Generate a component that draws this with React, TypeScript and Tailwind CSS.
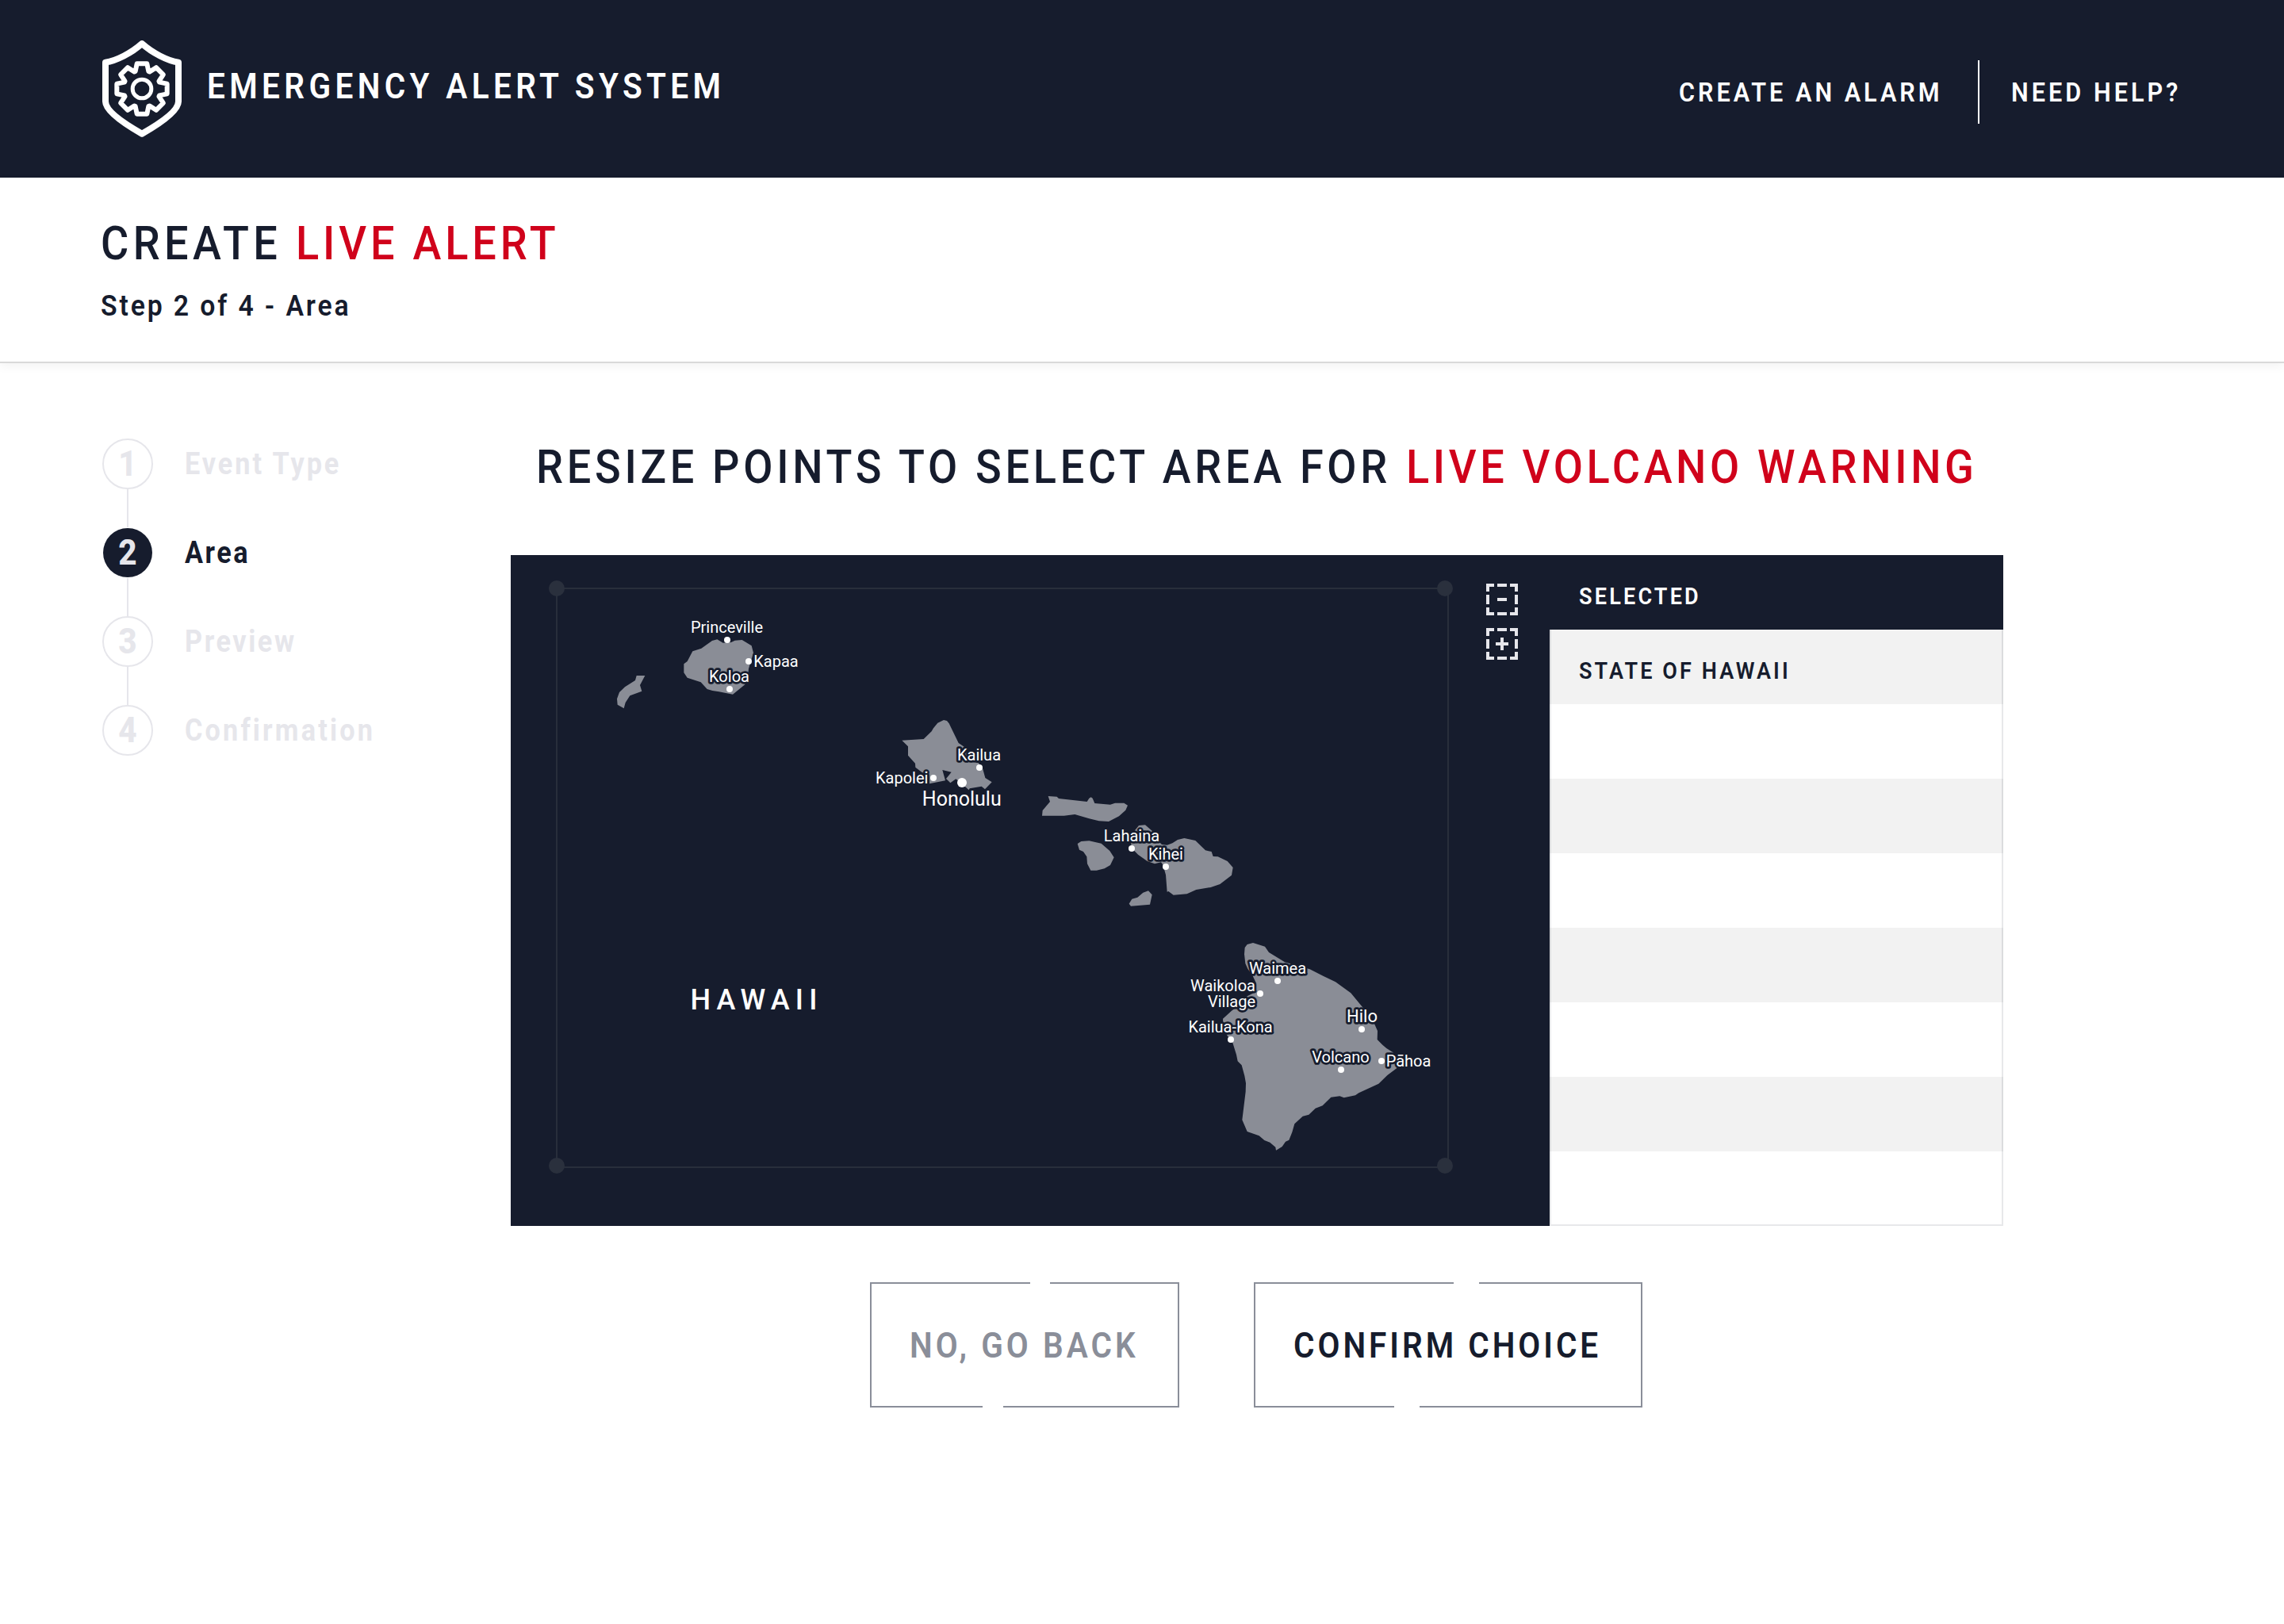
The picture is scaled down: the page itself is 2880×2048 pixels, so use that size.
const ISLANDS = [
  { x: 660, y: 690, points: "428,486 460,486 441,522 448,545 403,562 386,588 380,610 356,596 354,574 363,549 384,529 423,504" },
  { x: 660, y: 690, points: "733,349 755,362 786,360 800,353 827,351 863,373 870,400 864,420 852,460 850,480 838,520 792,557 740,547 715,543 695,537 671,511 620,494 607,475 607,442 620,432 640,394 673,383 714,354" },
  { x: 1080, y: 860, points: "172,221 254,216 284,187 291,175 307,155 330,144 342,147 350,157 386,231 408,246 430,300 462,307 478,330 487,363 512,379 486,406 473,395 428,403 425,409 410,395 376,367 355,382 339,366 359,341 325,333 336,373 276,385 275,350 248,342 223,323 222,308 195,278 195,244" },
  { x: 1080, y: 860, points: "725,432 758,434 765,441 872,453 880,440 887,436 893,440 901,459 960,464 978,458 1012,458 1026,467 1018,485 993,508 954,528 917,526 880,517 826,501 785,506 702,506 704,486 732,453" },
  { x: 1080, y: 860, points: "836,612 850,603 880,601 926,611 958,639 974,664 960,693 938,706 908,713 886,713 873,688 871,661 858,642 843,635" },
  { x: 1080, y: 860, points: "1104,790 1118,805 1110,842 1038,848 1031,839 1042,821 1063,815 1084,797" },
  { x: 1080, y: 860, points: "1053,562 1068,543 1092,541 1118,563 1130,590 1155,615 1175,617 1195,610 1215,597 1240,591 1282,600 1320,637 1343,642 1349,660 1367,661 1403,678 1424,702 1419,731 1375,765 1340,777 1285,786 1250,802 1199,806 1180,792 1175,794 1170,730 1163,705 1158,690 1152,682 1128,688 1100,678 1065,653 1040,628 1038,600" },
  { x: 1460, y: 1160, points: "327,130 329,105 338,93 360,87 405,101 420,123 480,160 575,187 625,212 672,235 730,277 772,328 800,360 820,395 831,420 830,453 850,473 865,486 890,502 905,525 925,540 905,560 868,588 835,620 760,655 747,664 704,673 688,667 655,671 623,703 596,713 571,737 548,743 517,772 508,803 496,833 483,839 470,858 447,872 445,860 424,842 403,834 383,817 338,801 319,757 332,650 333,618 328,590 317,550 302,535 297,510 283,465 262,437 247,400 246,374 278,345 310,320 335,290 365,275 372,240 358,210 340,185 331,165" },
];

const CITIES = [
  { dot: [917, 807, 4], labels: [["Princeville", 916.5, 798, 20]] },
  { dot: [944, 834, 4], labels: [["Kapaa", 978.5, 841, 20]] },
  { dot: [920, 869, 4], labels: [["Koloa", 919.5, 860, 20]] },
  { dot: [1235, 968, 4], labels: [["Kailua", 1234.5, 959, 20]] },
  { dot: [1177, 981, 4], labels: [["Kapolei", 1137.2, 988, 20]] },
  { dot: [1213, 987, 6], labels: [["Honolulu", 1212.8, 1015.5, 25]] },
  { dot: [1427, 1070, 4], labels: [["Lahaina", 1427, 1061, 20]] },
  { dot: [1470, 1093, 4], labels: [["Kihei", 1470, 1084, 20]] },
  { dot: [1611, 1237, 4], labels: [["Waimea", 1611, 1228, 20]] },
  { dot: [1589, 1253, 4], labels: [["Waikoloa", 1542, 1250, 20], ["Village", 1553, 1270, 20]] },
  { dot: [1552, 1311, 4], labels: [["Kailua-Kona", 1551.5, 1302, 20]] },
  { dot: [1717, 1298, 4], labels: [["Hilo", 1717.5, 1289, 22]] },
  { dot: [1691, 1349, 4], labels: [["Volcano", 1690.5, 1340, 20]] },
  { dot: [1742, 1338, 4], labels: [["Pāhoa", 1776, 1345, 20]] },
] as { dot: number[]; labels: [string, number, number, number][] }[];

// Eight-toothed gear outline centred on (207, 216).
const GEAR = Array.from({ length: 8 }, (_, k) => {
  const a = (k * Math.PI) / 4;
  const p = (x: number, y: number) =>
    `${(207 + x * Math.cos(a) - y * Math.sin(a)).toFixed(1)} ${(216 + x * Math.sin(a) + y * Math.cos(a)).toFixed(1)}`;
  return `${k === 0 ? "M" : "L"}${p(-25, -66)} L${p(-19, -95)} L${p(19, -95)} L${p(25, -66)}`;
}).join(" ") + "Z";

function Logo() {
  return (
    <svg className="mt-[51px] h-[122px] w-[100px]" viewBox="57 33 300 366" fill="none" stroke="#fff" strokeLinejoin="round">
      <path strokeWidth="24" d="M207 45C168 80 110 110 69 116V264C69 300 140 348 207 386C274 348 345 300 345 264V116C304 110 246 80 207 45Z" />
      <path strokeWidth="18" d={GEAR} />
      <circle cx="207" cy="216" r="35.5" strokeWidth="15" />
    </svg>
  );
}

function SelectIcon({ plus }: { plus?: boolean }) {
  return (
    <g stroke="#e6e6eb" strokeWidth="4" fill="none">
      <path d="M2 10V2H10M14 2H26M30 2H38V10M38 14V26M38 30V38H30M26 38H14M10 38H2V30M2 26V14" />
      <path d={plus ? "M12 20H28M20 12V28" : "M14 20H26"} />
    </g>
  );
}

function HawaiiMap() {
  return (
    <svg className="h-[846px] w-[1310px] shrink-0 bg-[#161c2d]" viewBox="644 700 1310 846" fontFamily="Roboto, sans-serif">
      <path d="M702 742H1826V1472H702Z" fill="none" stroke="#282e3b" strokeWidth="2" />
      {[[702, 742], [1822, 742], [702, 1470], [1822, 1470]].map(([x, y]) => (
        <circle key={`${x}-${y}`} cx={x} cy={y} r="10" fill="#2a303d" />
      ))}
      {ISLANDS.map((i) => (
        <polygon key={i.points} points={i.points} fill="#8a8d96" transform={`translate(${i.x} ${i.y}) scale(0.33333)`} />
      ))}
      {CITIES.map((c) => (
        <g key={c.labels[0][0]} fill="#fff" textAnchor="middle">
          {c.labels.map(([name, x, y, size]) => (
            <text key={name} x={x} y={y} fontSize={size} stroke="#161c2d" strokeWidth="5.5" strokeLinejoin="round" paintOrder="stroke">
              {name}
            </text>
          ))}
          <circle cx={c.dot[0]} cy={c.dot[1]} r={c.dot[2]} />
        </g>
      ))}
      <text x="870.5" y="1272.5" fontSize="36" fontWeight="500" letterSpacing="7.2" fill="#fff">HAWAII</text>
      <g transform="translate(1874 736)"><SelectIcon /></g>
      <g transform="translate(1874 792)"><SelectIcon plus /></g>
    </svg>
  );
}

// Narrowed display lettering, anchored at its left edge.
function Label({ className, children }: { className: string; children: string }) {
  return <span className={`block origin-left scale-x-90 whitespace-nowrap ${className}`}>{children}</span>;
}

const STEPS = [
  { label: "Event Type", spacing: "tracking-[3.31px]" },
  { label: "Area", spacing: "tracking-[2.83px]", active: true },
  { label: "Preview", spacing: "tracking-[2.88px]" },
  { label: "Confirmation", spacing: "tracking-[3.55px]" },
];

function Steps() {
  return (
    <ol className="mt-[95px] ml-[129px] flex w-[515px] shrink-0 flex-col font-bold">
      {STEPS.map((s, i) => (
        <li key={s.label} className={s.active ? "text-[#161c2d]" : "text-[#e6e6eb]"}>
          {i > 0 && <div className="ml-[31px] h-12 w-0.5 bg-[#e6e6eb]" />}
          <div className="flex h-16 items-center">
            <span
              className={
                s.active
                  ? "mx-px flex size-[62px] items-center justify-center rounded-full bg-[#161c2d] text-[45px] font-extrabold text-[#e6e6eb]"
                  : "flex size-16 items-center justify-center rounded-full border-2 border-[#e6e6eb] text-[45px] font-extrabold"
              }
            >
              <span className="block scale-x-90">{i + 1}</span>
            </span>
            <div className="ml-10 text-[38px] leading-[64px]">
              <Label className={s.spacing}>{s.label}</Label>
            </div>
          </div>
        </li>
      ))}
    </ol>
  );
}

const ROWS = ["STATE OF HAWAII", "", "", "", "", "", "", ""];

function SelectedTable() {
  return (
    <div className="flex w-[572px] flex-col text-[30px] font-semibold">
      <div className="flex h-[94px] items-center bg-[#161c2d] pt-2 pl-[37px] text-white">
        <Label className="tracking-[3.57px]">SELECTED</Label>
      </div>
      <ul className="relative">
        {ROWS.map((r, i) => (
          <li key={i} className="flex h-[94px] items-center pt-2 pl-[37px] odd:bg-[#f2f2f2]">
            <Label className="tracking-[3.45px]">{r}</Label>
          </li>
        ))}
        <li className="absolute inset-0 border-2 border-t-0 border-[#161c2d]/10" />
      </ul>
    </div>
  );
}

export default function App() {
  return (
    <div className="min-h-[2048px] w-[2880px] bg-white font-[Roboto,sans-serif] text-[#161c2d]">
      <header className="flex h-[224px] items-start bg-[#161c2d] pl-[129px] font-semibold text-white">
        <Logo />
        <h1 className="mt-[79px] ml-8 text-[45px] leading-[60px]">
          <Label className="tracking-[5.99px]">EMERGENCY ALERT SYSTEM</Label>
        </h1>
        <nav className="mt-[76px] ml-auto flex h-20 w-[763px] items-center text-[34px] leading-[48px]">
          <div className="w-[377px]">
            <Label className="tracking-[4.45px]">CREATE AN ALARM</Label>
          </div>
          <span className="h-20 w-0.5 bg-white" />
          <div className="ml-10">
            <Label className="tracking-[4.5px]">NEED HELP?</Label>
          </div>
        </nav>
      </header>
      <section className="flex h-[234px] flex-col border-b-2 border-[#d9d9d9] pt-[47px] pl-[127px] shadow-[0_4px_12px_rgba(0,0,0,0.05)]">
        <h2 className="flex text-[60px] leading-[72px] font-medium">
          <div className="w-[246px]">
            <Label className="tracking-[6.03px]">CREATE</Label>
          </div>
          <div className="text-[#d0021b]">
            <Label className="tracking-[5.41px]">LIVE ALERT</Label>
          </div>
        </h2>
        <p className="mt-[18px] text-[37.5px] leading-[48px] font-semibold">
          <Label className="tracking-[3.2px]">Step 2 of 4 - Area</Label>
        </p>
      </section>
      <main className="flex">
        <Steps />
        <div className="flex w-[1882px] flex-col">
          <h2 className="mt-[95px] ml-8 flex text-[60px] leading-[72px] font-medium">
            <div className="w-[1097px]">
              <Label className="tracking-[5.26px]">RESIZE POINTS TO SELECT AREA FOR</Label>
            </div>
            <div className="text-[#d0021b]">
              <Label className="tracking-[5.18px]">LIVE VOLCANO WARNING</Label>
            </div>
          </h2>
          <div className="mt-[75px] flex">
            <HawaiiMap />
            <SelectedTable />
          </div>
          <div className="mt-[71px] ml-[453px] flex gap-[94px] text-[45px] font-semibold">
            <button className="relative flex h-[158px] w-[390px] items-center border-2 border-[#8a8e99] pt-px pl-12 text-[#8a8e99]">
              <span className="absolute -top-0.5 left-[200px] h-0.5 w-[25px] bg-white" />
              <Label className="tracking-[4.5px]">NO, GO BACK</Label>
              <span className="absolute -bottom-0.5 left-[140px] h-0.5 w-[26px] bg-white" />
            </button>
            <button className="relative flex h-[158px] w-[490px] items-center border-2 border-[#8a8e99] pt-px pl-12">
              <span className="absolute -top-0.5 left-[250px] h-0.5 w-[32px] bg-white" />
              <Label className="tracking-[4.44px]">CONFIRM CHOICE</Label>
              <span className="absolute -bottom-0.5 left-[175px] h-0.5 w-[32px] bg-white" />
            </button>
          </div>
        </div>
      </main>
    </div>
  );
}
